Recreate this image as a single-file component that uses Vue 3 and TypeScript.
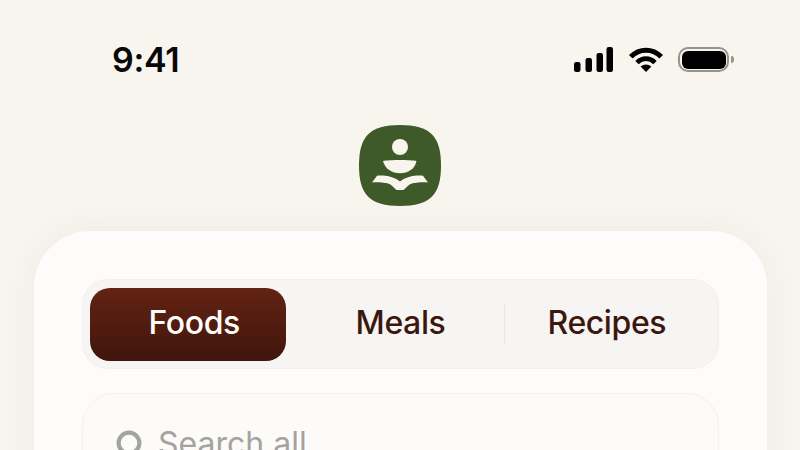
<template>
  <div class="screen">
    <!-- Status bar -->
    <div class="status-bar">
      <span class="time">9:41</span>
      <div class="status-icons">
        <svg width="39" height="25" viewBox="0 0 39 25" fill="#000">
          <rect x="0" y="15" width="6.5" height="10" rx="2.2" />
          <rect x="11.5" y="11" width="6.5" height="14" rx="2.2" />
          <rect x="22.5" y="6" width="6.5" height="19" rx="2.2" />
          <rect x="32.5" y="0" width="6.5" height="25" rx="2.2" />
        </svg>
        <svg class="wifi" width="34" height="25" viewBox="0 0 34 25" fill="none" stroke="#000">
          <path d="M1.8 9.8C10.4 0.9 23.6 0.9 32.2 9.8" stroke-width="5" />
          <path d="M8 15.6C13.2 10.4 20.8 10.4 26 15.6" stroke-width="4.8" />
          <path d="M11.6 19.6C15 16.8 19 16.8 22.4 19.6L17 25Z" fill="#000" stroke="none" />
        </svg>
        <div class="battery">
          <div class="battery-body"><div class="battery-level"></div></div>
          <div class="battery-nub"></div>
        </div>
      </div>
    </div>

    <!-- Logo -->
    <div class="logo-row">
      <svg width="82" height="82" viewBox="0 0 82 82">
        <path
          d="M41 0C71 0 82 11 82 40.5C82 70 71 81 41 81C11 81 0 70 0 40.5C0 11 11 0 41 0Z"
          fill="#3e5a28"
        />
        <circle cx="41" cy="22" r="8" fill="#f9f5ec" />
        <path d="M24 36C30 34.6 52 34.6 57.5 36C56 44 49 48.2 41 48.2C33 48.2 26 44 24 36Z" fill="#f9f5ec" />
        <path
          d="M18 50.7C23 50.2 33 50.2 41 56.5C49 50.2 59 50.2 64 50.7L69 57.4C62 57.2 55 57.6 50.5 59.4L44.5 65H37.5L31.5 59.4C27 57.6 20 57.2 13 57.4Z"
          fill="#f9f5ec"
        />
      </svg>
    </div>

    <!-- Card -->
    <div class="card">
      <div class="tabs">
        <div class="indicator"></div>
        <button
          v-for="(tab, i) in tabs"
          :key="tab"
          class="tab"
          :class="{ active: i === selected, divided: i === 2 }"
          @click="selected = i"
        >
          {{ tab }}
        </button>
      </div>

      <div class="search">
        <svg width="30" height="30" viewBox="0 0 30 30" fill="none" stroke="#a3a3a0" stroke-width="4.2">
          <circle cx="13" cy="13" r="10.4" />
          <path d="M21 21L28 28" stroke-linecap="round" />
        </svg>
        <span class="placeholder">Search all</span>
      </div>
    </div>
  </div>
</template>

<script setup lang="ts">
import { ref } from 'vue'

const tabs = ['Foods', 'Meals', 'Recipes']
const selected = ref(0)
</script>

<style>
html,
body {
  margin: 0;
  background: #f8f5ee;
}
</style>

<style scoped>
.screen {
  width: 800px;
  height: 450px;
  overflow: hidden;
  background: #f8f5ee;
  font-family: Inter, 'Liberation Sans', sans-serif;
}

.status-bar {
  display: flex;
  justify-content: space-between;
  align-items: center;
  height: 25px;
  padding: 47px 66px 0 112px;
}

.time {
  font-size: 34px;
  font-weight: 600;
  line-height: 25px;
  color: #080808;
  letter-spacing: -0.3px;
}

.status-icons {
  display: flex;
  align-items: center;
}

.wifi {
  margin-left: 16px;
}

.battery {
  display: flex;
  align-items: center;
  margin-left: 15px;
}

.battery-body {
  box-sizing: border-box;
  width: 51px;
  height: 25px;
  padding: 1.5px;
  border: 2px solid #94948e;
  border-radius: 10px;
}

.battery-level {
  height: 100%;
  background: #000;
  border-radius: 6px;
}

.battery-nub {
  width: 3px;
  height: 7px;
  margin-left: 2px;
  background: #94948e;
  border-radius: 0 3px 3px 0;
}

.logo-row {
  display: flex;
  justify-content: center;
  padding-top: 53px;
}

.logo-row svg {
  display: block;
}

.card {
  box-sizing: border-box;
  width: 733px;
  height: 300px;
  margin: 24px 0 0 34px;
  padding: 48px;
  background: #fefcfa;
  border-radius: 56px;
  box-shadow: 0 0 36px rgba(60, 60, 50, 0.05);
}

.tabs {
  position: relative;
  display: grid;
  grid-template-columns: repeat(3, 1fr);
  box-sizing: border-box;
  height: 90px;
  padding: 8px;
  background: #f6f5f3;
  border: 1px solid #f1f0ed;
  border-radius: 26px;
}

.indicator {
  position: absolute;
  top: 8px;
  left: 7px;
  width: 196px;
  height: 73px;
  border-radius: 20px;
  background: linear-gradient(180deg, #632313 0%, #3f150c 100%);
}

.tab {
  position: relative;
  padding: 0 0 4px;
  border: none;
  background: none;
  font-family: inherit;
  font-size: 32px;
  font-weight: 500;
  letter-spacing: -0.4px;
  color: #3c170e;
  cursor: pointer;
}

.tab.active {
  color: #fefcf8;
}

.tab.divided::before {
  content: '';
  position: absolute;
  top: 16px;
  left: 0;
  width: 1px;
  height: 40px;
  background: #e8e6e2;
}

.search {
  display: flex;
  align-items: flex-start;
  gap: 12px;
  box-sizing: border-box;
  height: 100px;
  margin-top: 24px;
  padding: 36px 33px;
  background: #fdfbf9;
  border: 1px solid #f4f2ef;
  border-radius: 32px;
}

.search svg {
  flex: none;
}

.placeholder {
  margin-top: -5px;
  font-size: 32px;
  line-height: 38px;
  color: #a3a3a0;
}
</style>
